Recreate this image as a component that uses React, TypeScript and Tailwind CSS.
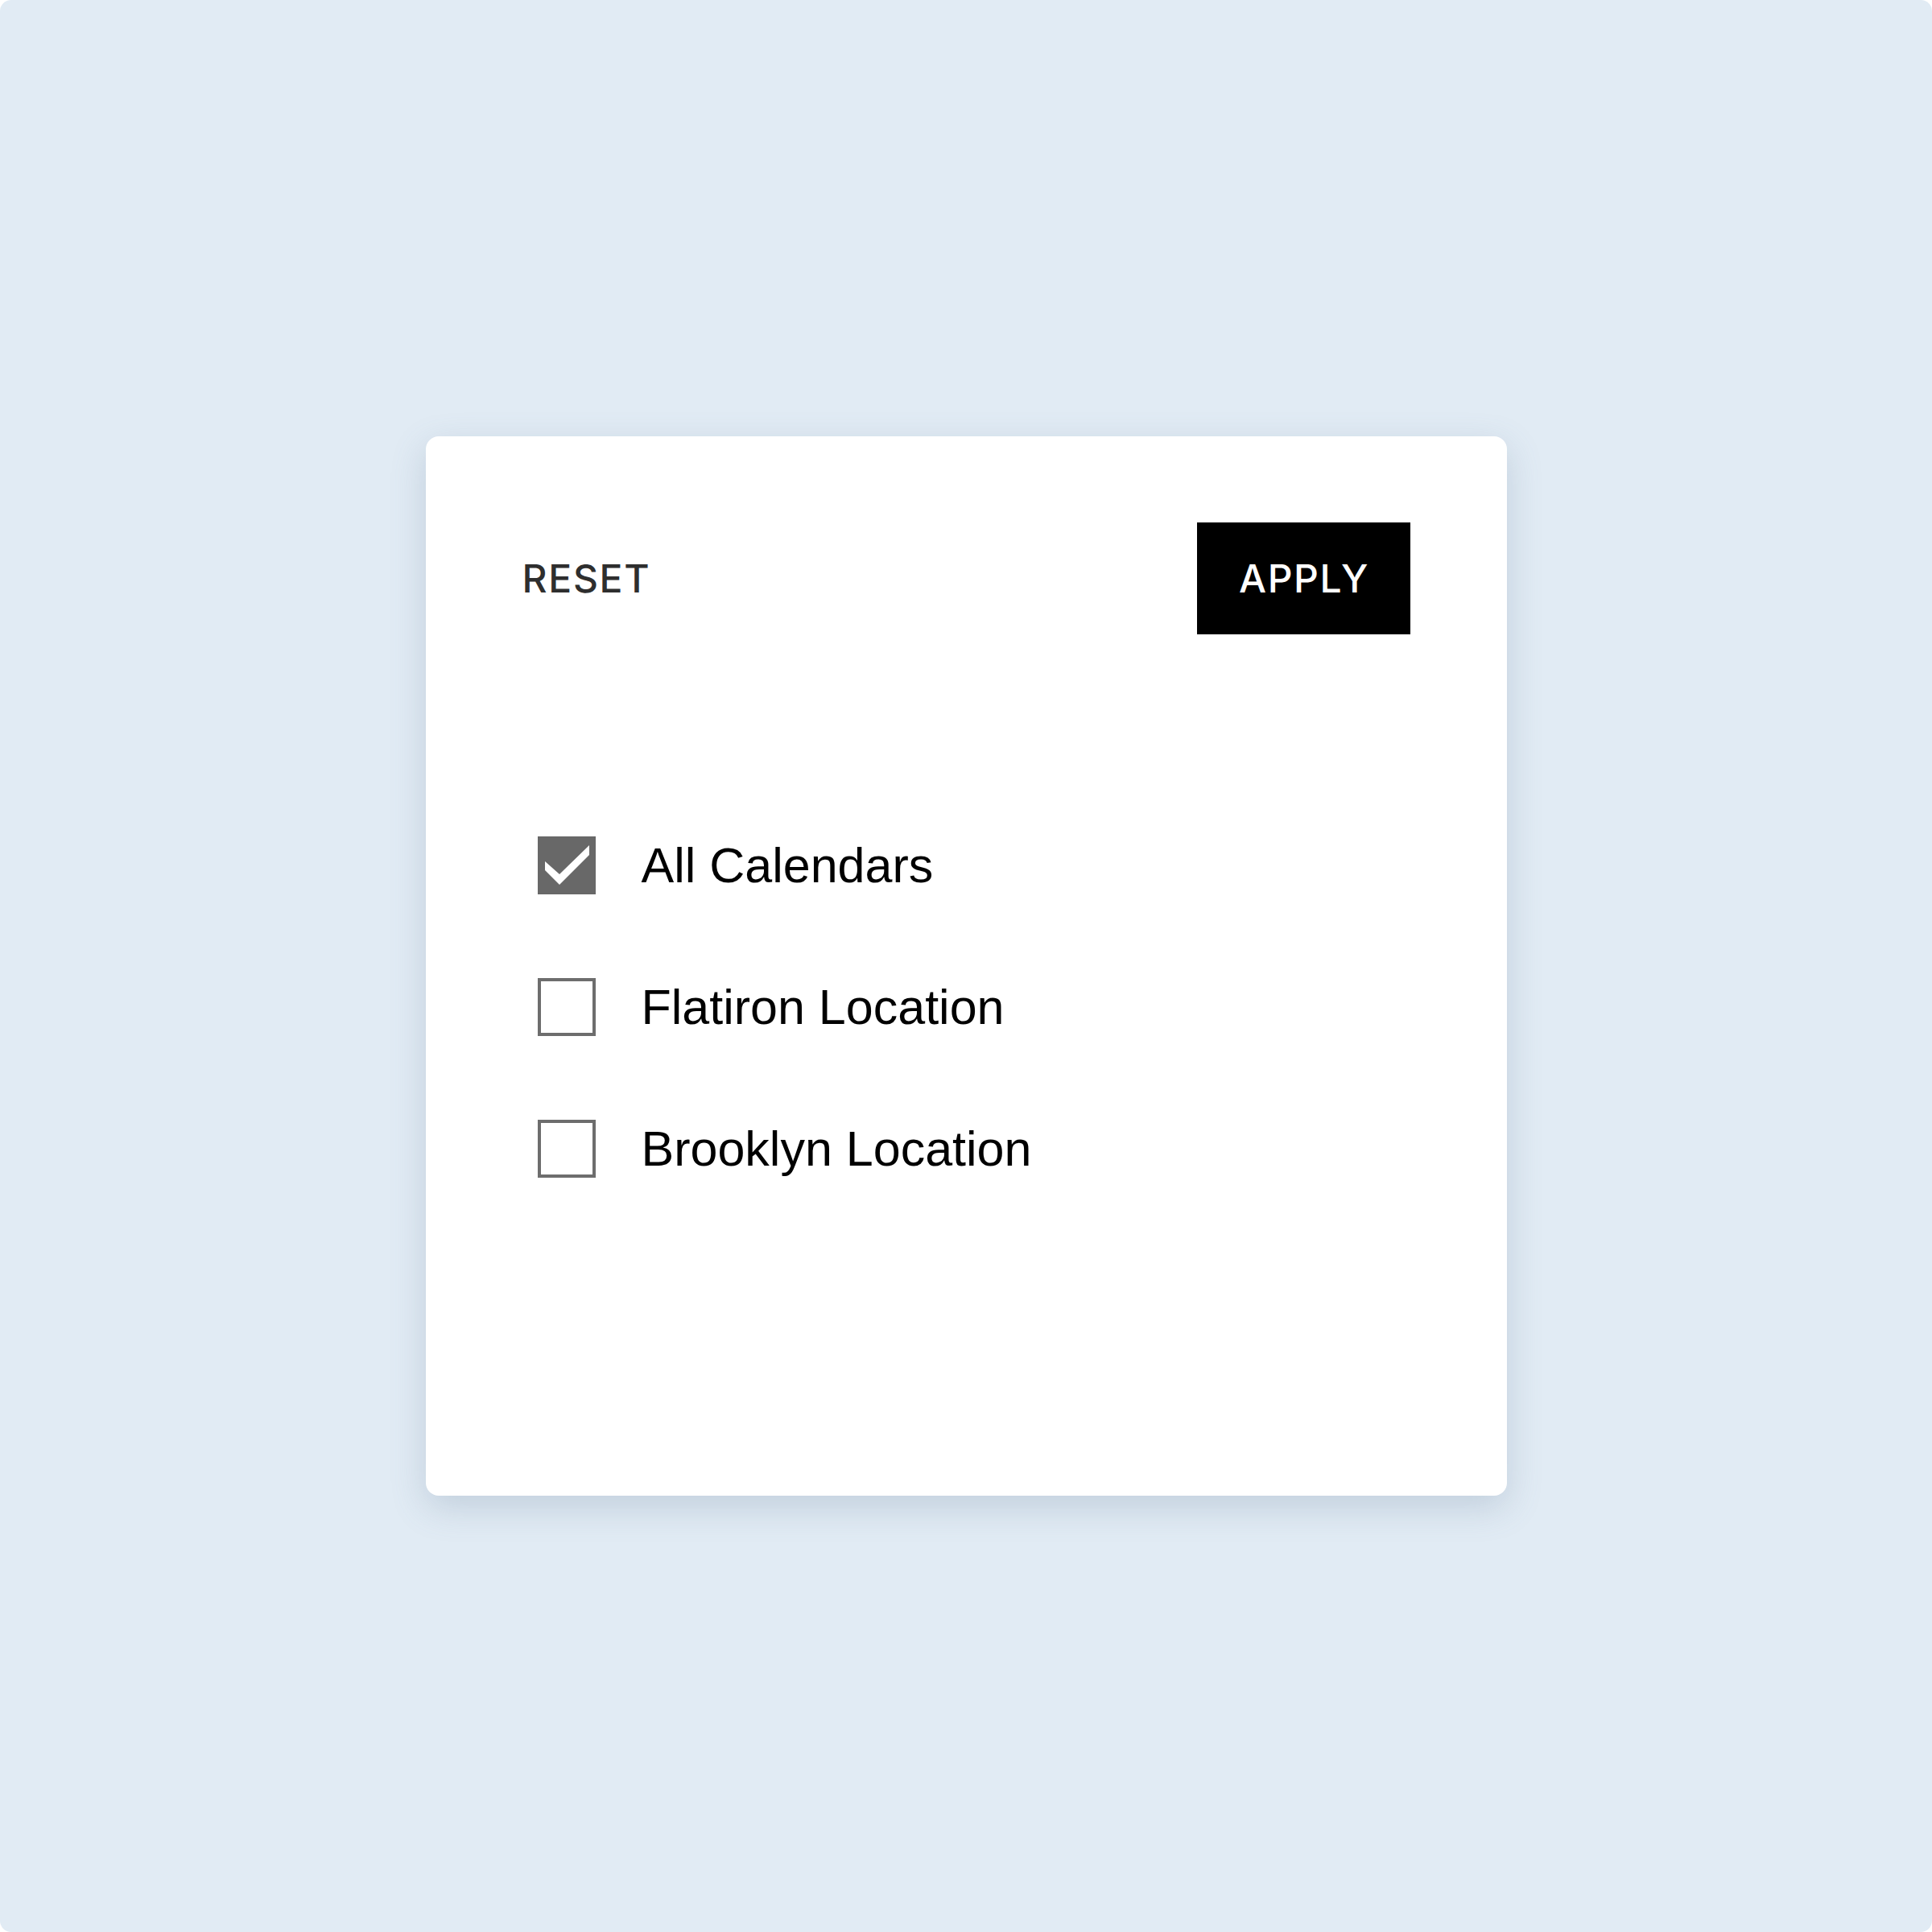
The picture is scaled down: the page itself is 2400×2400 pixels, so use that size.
import React, { useState } from 'react';

const CALENDARS = ['All Calendars', 'Flatiron Location', 'Brooklyn Location'];

function CheckBox({ checked }: { checked: boolean }) {
  if (checked) {
    return (
      <span className="flex h-[72px] w-[72px] shrink-0 bg-[#686868]">
        <svg width="72" height="72" viewBox="0 0 72 72">
          <polygon points="9,31 27,47 64,11 64,23 27,60 9,42" fill="#ffffff" />
        </svg>
      </span>
    );
  }
  return <span className="block h-[72px] w-[72px] shrink-0 border-[4px] border-[#6d6d6d] bg-white" />;
}

export default function App() {
  const [selected, setSelected] = useState<string[]>(['All Calendars']);

  const toggle = (name: string) => {
    setSelected(s => (s.includes(name) ? s.filter(n => n !== name) : [...s, name]));
  };

  return (
    <div className="bg-white">
      <div className="flex h-[2400px] w-[2400px] items-center justify-center rounded-[14px] bg-[#e1ebf4]">
        <div className="flex h-[1316px] w-[1343px] flex-col rounded-[16px] bg-white px-[120px] pt-[107px] shadow-[0_14px_44px_rgba(90,115,145,0.24)]">
          <div className="flex items-center justify-between">
            <button className="font-['Inter',sans-serif] text-[48px] font-medium leading-none tracking-[0.035em] text-[#2e2e2e]">
              RESET
            </button>
            <button className="flex h-[139px] w-[265px] items-center justify-center bg-black pl-[2px] font-['Inter',sans-serif] text-[48px] font-medium leading-none tracking-[0.035em] text-white">
              APPLY
            </button>
          </div>

          <div className="mt-[251px] flex flex-col gap-[104px] pl-[19px]">
            {CALENDARS.map(name => (
              <label key={name} className="flex cursor-pointer items-center gap-[57px]" onClick={() => toggle(name)}>
                <CheckBox checked={selected.includes(name)} />
                <span className="font-['Liberation_Sans',Arial,sans-serif] text-[61px] leading-none text-black">
                  {name}
                </span>
              </label>
            ))}
          </div>
        </div>
      </div>
    </div>
  );
}
